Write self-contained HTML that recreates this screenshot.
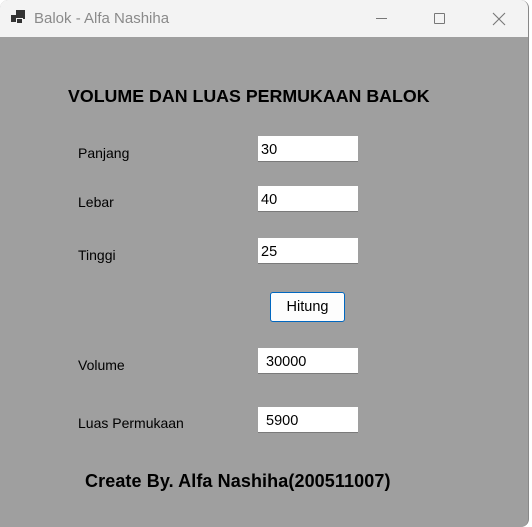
<!DOCTYPE html>
<html><head><meta charset="utf-8"><style>
*{margin:0;padding:0;box-sizing:border-box}
body{width:532px;height:527px;background:#fff;position:relative;overflow:hidden;font-family:"Segoe UI","Liberation Sans",sans-serif}
.win{position:absolute;left:0;top:0;width:529px;height:527px;background:#9f9f9f;border-radius:8px 8px 8px 0;overflow:hidden;border-right:1px solid #888}
.tb{position:absolute;left:0;top:0;width:100%;height:37px;background:#f3f3f3}
.tt{position:absolute;left:34px;top:10px;font-size:15px;color:#8a8a8a}
.a{position:absolute;font-size:14px;color:#000}
.h{position:absolute;font-family:"Liberation Sans",sans-serif;font-weight:bold;font-size:17.8px;color:#000}
.in{position:absolute;left:258px;width:100px;height:26px;background:#fff;border-bottom:1px solid #7a7a7a;font-size:14.5px;padding:6px 0 0 4px;color:#000}
.btn{position:absolute;left:270px;top:292px;width:75px;height:30px;background:#fdfdfd;border:1px solid #0067c0;border-radius:3px;font-size:14.5px;text-align:center;line-height:28px}
</style></head><body>
<div class="win">
<div class="tb">
<div style="position:absolute;left:11px;top:15px;width:6px;height:7px;background:#333"></div>
<div style="position:absolute;left:16px;top:10px;width:9px;height:9px;background:#333"></div>
<div style="position:absolute;left:16px;top:18px;width:7px;height:6px;background:#333;border:1px solid #f3f3f3"></div>
<div class="tt">Balok - Alfa Nashiha</div>
<div style="position:absolute;left:376px;top:18px;width:11px;height:1px;background:#777"></div>
<div style="position:absolute;left:434px;top:13px;width:11px;height:11px;border:1px solid #777;border-radius:1px"></div>
<svg style="position:absolute;left:492px;top:12px" width="14" height="14"><path d="M1 1L13 13M13 1L1 13" stroke="#777" stroke-width="1.1"/></svg>
</div>
<div class="h" style="left:68px;top:86px">VOLUME DAN LUAS PERMUKAAN BALOK</div>
<div class="a" style="left:78px;top:145px">Panjang</div>
<div class="a" style="left:78px;top:194px">Lebar</div>
<div class="a" style="left:78px;top:247px">Tinggi</div>
<div class="a" style="left:78px;top:357px">Volume</div>
<div class="a" style="left:78px;top:415px">Luas Permukaan</div>
<div class="in" style="top:136px;padding-left:3px">30</div>
<div class="in" style="top:186px;padding-left:3px">40</div>
<div class="in" style="top:238px;padding-left:3px">25</div>
<div class="btn">Hitung</div>
<div class="in" style="top:348px;padding-left:8px">30000</div>
<div class="in" style="top:407px;padding-left:8px">5900</div>
<div class="h" style="left:85px;top:471px;font-size:18px;letter-spacing:0.1px">Create By. Alfa Nashiha(200511007)</div>
</div>
</body></html>
